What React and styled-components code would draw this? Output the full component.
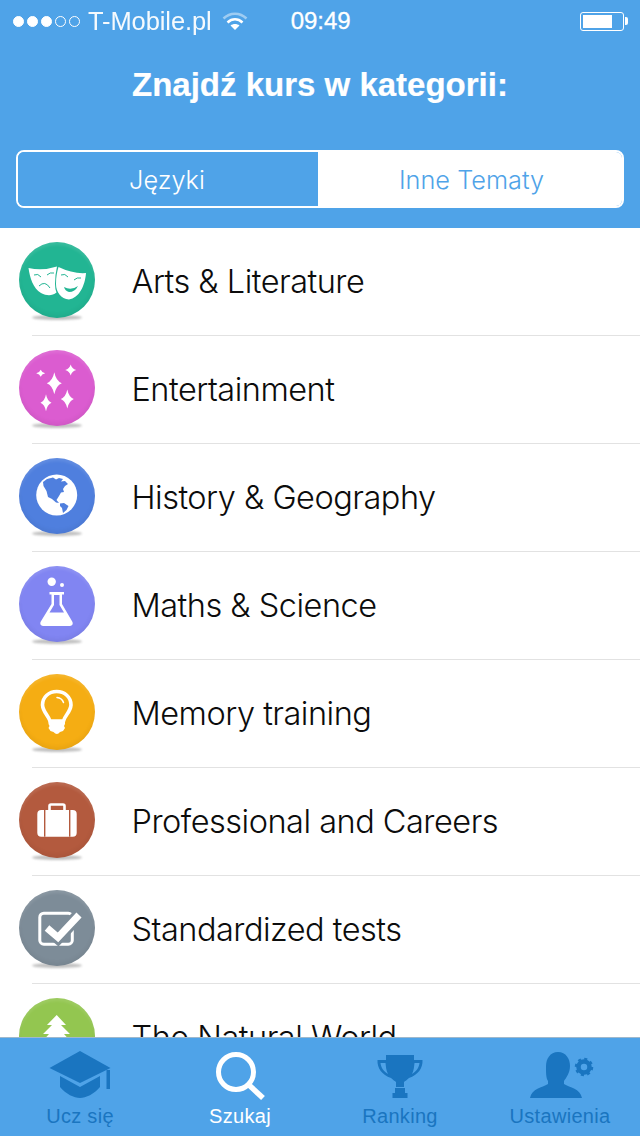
import React from "react";
import styled, { createGlobalStyle } from "styled-components";

const BLUE = "#4fa3e8";
const DARK = "#1a75c0";

const GlobalStyle = createGlobalStyle`
    html, body {
        margin: 0;
        padding: 0;
        background: #fff;
    }
    * { box-sizing: border-box; }
`;

const star = (cx, cy, rx, ry) => {
    const k = 0.22;
    return `M${cx} ${cy - ry}Q${cx + rx * k} ${cy - ry * k} ${cx + rx} ${cy}Q${cx + rx * k} ${cy + ry * k} ${cx} ${cy + ry}Q${cx - rx * k} ${cy + ry * k} ${cx - rx} ${cy}Q${cx - rx * k} ${cy - ry * k} ${cx} ${cy - ry}Z`;
};

const Masks = ({ color }) => (
    <svg width="76" height="76" viewBox="0 0 76 76">
        <path fill="#fff" d="M9.5 26Q24 29 38 24.5Q36 33 36 42Q36 47 37.5 50.5C33 54 28 54 22 51C14 46 11 36 9.5 26Z" />
        <path fill="none" stroke={color} strokeWidth="1" d="M15 33Q19 31 22 35M28 33Q31 30 35 31M20 44Q26 38 31 46" />
        <path fill="#fff" d="M39.5 25Q54 32 67 31C66 44 60 56 50 57.5C42 57 37 50 37 42C37 35 38 30 39.5 25Z" />
        <path fill="none" stroke={color} strokeWidth="1" d="M42 33Q46 31 49 35M55 38Q58 35 62 36" />
        <path fill={color} d="M45 45Q52 49 59 44Q56 50 50 50Q46 49 45 45Z" />
    </svg>
);

const Stars = () => (
    <svg width="76" height="76" viewBox="0 0 76 76">
        <path fill="#fff" d={star(21.7, 23.3, 4.5, 3.5)} />
        <path fill="#fff" d={star(51.7, 20, 5.5, 5.5)} />
        <path fill="#fff" d={star(35.3, 33.3, 7.5, 11)} />
        <path fill="#fff" d={star(48.3, 49, 6.5, 9.5)} />
        <path fill="#fff" d={star(27, 52.7, 5.5, 8.5)} />
    </svg>
);

const Globe = ({ color }) => (
    <svg width="76" height="76" viewBox="0 0 76 76">
        <circle cx="37.7" cy="37" r="20.5" fill="#fff" />
        <path fill={color} d="M24 24L28 21L34 19.5L37 21.5L40 20L44 21L42 23.5L46 23L49 26L46 28L44 31L45 34L42 34.5L40 38L37.5 42L40 45L37 44.5L33 41L29 39L27.5 33L24.5 28Z" />
        <path fill={color} d="M41 45.5L45 45L49.5 48L47.5 52L44 55L43 50L41 48Z" />
    </svg>
);

const Flask = ({ color }) => (
    <svg width="76" height="76" viewBox="0 0 76 76">
        <circle cx="32.7" cy="15.7" r="4.2" fill="#fff" />
        <circle cx="43" cy="19" r="2" fill="#fff" />
        <path fill="#fff" d="M30.5 26H45V28.5H43V38L53.5 56Q54.5 59.5 51 60H24Q20.5 59.5 21.5 56L32.5 38V28.5H30.5Z" />
        <path fill={color} d="M35 29H40.5V39L45 46.5H30.5L35 39Z" />
    </svg>
);

const Bulb = () => (
    <svg width="76" height="76" viewBox="0 0 76 76">
        <path fill="none" stroke="#fff" strokeWidth="3.6" d="M31 47C29 41 24 38 23.5 31C23.5 23 30 17.5 37.7 17.5C45.5 17.5 52 23 52 31C51.5 38 46 41 44.5 47Z" />
        <path fill="#fff" d="M29.5 46H46V50L45 52L46 54L44 57L41 58Q38 62 34.5 58L31.5 57L29.5 54L30.5 52L29.5 50Z" />
        <path fill="none" stroke="#fff" strokeWidth="1.5" strokeLinecap="round" d="M38 23.5Q43 24 44.5 28.5" />
    </svg>
);

const Case = ({ color }) => (
    <svg width="76" height="76" viewBox="0 0 76 76">
        <path fill="none" stroke="#fff" strokeWidth="2.6" d="M30.5 29V24Q30.5 22.5 32 22.5H44Q45.5 22.5 45.5 24V29" />
        <rect x="18.3" y="28" width="39.4" height="26.7" rx="4" fill="#fff" />
        <rect x="25" y="28" width="1.4" height="26.7" fill={color} />
        <rect x="50" y="28" width="1.4" height="26.7" fill={color} />
    </svg>
);

const Check = ({ color }) => (
    <svg width="76" height="76" viewBox="0 0 76 76">
        <rect x="20.8" y="23.2" width="32.5" height="31" rx="4" fill="none" stroke="#fff" strokeWidth="3" />
        <path fill="none" stroke={color} strokeWidth="13" d="M28 38L39 47.5L60 25" />
        <path fill="none" stroke="#fff" strokeWidth="7" d="M28 38L39 47.5L60 25" />
    </svg>
);

const Tree = () => (
    <svg width="76" height="76" viewBox="0 0 76 76">
        <path fill="#fff" d="M37.7 17L47 27H42L51 36H45L54 46H21L30 36H24L33 27H28Z" />
    </svg>
);

const categories = [
    { name: "Arts & Literature", color: "#22b593", Icon: Masks },
    { name: "Entertainment", color: "#db5cd0", Icon: Stars },
    { name: "History & Geography", color: "#4f7fde", Icon: Globe },
    { name: "Maths & Science", color: "#8185f2", Icon: Flask },
    { name: "Memory training", color: "#f5ad13", Icon: Bulb },
    { name: "Professional and Careers", color: "#b35a3e", Icon: Case },
    { name: "Standardized tests", color: "#7d8c98", Icon: Check },
    { name: "The Natural World", color: "#93c650", Icon: Tree },
];

const CapIcon = () => (
    <svg width="64" height="50" viewBox="0 0 64 50">
        <path fill={DARK} d="M32 1L62.5 18L32 33L1.5 18Z" />
        <path fill={DARK} d="M12 26L32 37L52 26V37C46 44 38 48 32 48C26 48 18 44 12 37Z" />
        <rect x="58.5" y="20" width="3.5" height="19" fill={DARK} />
    </svg>
);

const SearchIcon = () => (
    <svg width="64" height="50" viewBox="0 0 64 50">
        <circle cx="28" cy="22" r="17.5" fill="none" stroke="#fff" strokeWidth="5" />
        <path fill="none" stroke="#fff" strokeWidth="5.5" d="M41 35L55 48" />
    </svg>
);

const TrophyIcon = () => (
    <svg width="64" height="50" viewBox="0 0 64 50">
        <path fill={DARK} d="M18 5H46V10H54.5C55 18 50 25 41 28C39 30 37 31 36 32V37H28V32C27 31 25 30 23 28C14 25 9 18 9.5 10H18ZM12.5 13C13 17 15 21 20 24C18 20 18 17 17.5 13ZM51.5 13H46.5C46 17 46 20 44 24C49 21 51 17 51.5 13Z" />
        <rect x="27" y="38" width="10" height="5" fill={DARK} />
        <rect x="24.5" y="43" width="15" height="5" fill={DARK} />
    </svg>
);

const SettingsIcon = () => (
    <svg width="76" height="50" viewBox="0 0 76 50">
        <path fill={DARK} d="M36 2C44 2 48 9 48 16C48 23 44 28 42 31V34C48 38 58 38 60 48H8C10 38 20 38 26 34V31C24 28 24 23 24 16C24 9 28 2 36 2Z" />
        <circle cx="62" cy="17" r="5.5" fill="none" stroke={DARK} strokeWidth="4.5" />
        <circle cx="62" cy="17" r="8" fill="none" stroke={DARK} strokeWidth="2.5" strokeDasharray="3 3.28" />
    </svg>
);

const tabs = [
    { label: "Ucz się", Icon: CapIcon },
    { label: "Szukaj", Icon: SearchIcon, active: true },
    { label: "Ranking", Icon: TrophyIcon },
    { label: "Ustawienia", Icon: SettingsIcon },
];

export default function App() {
    return (
        <Screen>
            <GlobalStyle />
            <Header>
                <StatusBar>
                    <Signal>
                        <Dot $on /><Dot $on /><Dot $on /><Dot /><Dot />
                    </Signal>
                    <Carrier>T-Mobile.pl</Carrier>
                    <svg width="26" height="20" viewBox="0 0 26 20">
                        <path fill="none" stroke="#fff" strokeOpacity="0.45" strokeWidth="2.5" d="M1.5 7.5C8 1 18 1 24.5 7.5" />
                        <path fill="none" stroke="#fff" strokeWidth="2.5" d="M5.5 11.5C10 7.3 16 7.3 20.5 11.5" />
                        <path fill="#fff" d="M13 19L8.5 14.5C11 12.5 15 12.5 17.5 14.5Z" />
                    </svg>
                    <Clock>09:49</Clock>
                    <Battery>
                        <BatteryLevel />
                    </Battery>
                </StatusBar>
                <Title>Znajdź kurs w kategorii:</Title>
                <Segments>
                    <Segment $active>Języki</Segment>
                    <Segment>Inne Tematy</Segment>
                </Segments>
            </Header>
            <List>
                {categories.map(({ name, color, Icon }) => (
                    <Row key={name}>
                        <Badge $color={color}>
                            <Icon color={color} />
                        </Badge>
                        <RowText>
                            <RowName>{name}</RowName>
                        </RowText>
                    </Row>
                ))}
            </List>
            <TabBar>
                {tabs.map(({ label, Icon, active }) => (
                    <Tab key={label} $active={active}>
                        <Icon />
                        <span>{label}</span>
                    </Tab>
                ))}
            </TabBar>
        </Screen>
    );
}

const Screen = styled.div`
    width: 640px;
    height: 1136px;
    display: flex;
    flex-direction: column;
    overflow: hidden;
    font-family: "Inter", "Liberation Sans", sans-serif;
`;

const Header = styled.header`
    height: 228px;
    flex: none;
    background: ${BLUE};
    color: #fff;
    padding-top: 8px;
`;

const StatusBar = styled.div`
    height: 26px;
    display: flex;
    align-items: center;
    padding: 0 16px 0 13px;
    font-family: "Liberation Sans", sans-serif;
    svg {
        margin-left: 10px;
    }
`;

const Signal = styled.div`
    display: flex;
    gap: 3px;
`;

const Dot = styled.i`
    width: 11px;
    height: 11px;
    border-radius: 50%;
    border: 1px solid #fff;
    background: ${(p) => (p.$on ? "#fff" : "transparent")};
`;

const Carrier = styled.span`
    margin-left: 8px;
    font-size: 25.5px;
    opacity: 0.95;
    letter-spacing: -0.1px;
`;

const Clock = styled.span`
    margin-left: 43px;
    font-size: 24px;
    -webkit-text-stroke: 0.3px #fff;
`;

const Battery = styled.div`
    margin-left: auto;
    position: relative;
    width: 44px;
    height: 19px;
    border: 1.5px solid #fff;
    border-radius: 3px;
    padding: 2px;
    &::after {
        content: "";
        position: absolute;
        right: -5px;
        top: 4px;
        width: 3px;
        height: 8px;
        background: #fff;
        border-radius: 0 2px 2px 0;
    }
`;

const BatteryLevel = styled.div`
    width: 29px;
    height: 100%;
    background: #fff;
`;

const Title = styled.h1`
    margin: 30px 0 0;
    height: 42px;
    line-height: 42px;
    text-align: center;
    font-size: 33px;
    font-weight: 600;
    font-family: "Liberation Sans", sans-serif;
    -webkit-text-stroke: 0.2px #fff;
`;

const Segments = styled.div`
    margin: 44px 16px 0;
    height: 58px;
    display: flex;
    border: 2px solid #fff;
    border-radius: 8px;
    overflow: hidden;
`;

const Segment = styled.div`
    display: flex;
    align-items: center;
    justify-content: center;
    width: ${(p) => (p.$active ? "300px" : "auto")};
    flex: ${(p) => (p.$active ? "none" : 1)};
    padding: ${(p) => (p.$active ? "0 2px 0 0" : "0 0 0 3px")};
    background: ${(p) => (p.$active ? BLUE : "#fff")};
    color: ${(p) => (p.$active ? "#fff" : BLUE)};
    font-size: 25.3px;
    font-weight: 300;
`;

const List = styled.main`
    flex: 1;
    min-height: 0;
    overflow: hidden;
    background: #fff;
    isolation: isolate;
`;

const Row = styled.div`
    height: 108px;
    display: flex;
    padding-left: 19px;
`;

const Badge = styled.div`
    position: relative;
    flex: none;
    width: 76px;
    height: 76px;
    margin-top: 14px;
    border-radius: 50%;
    background: ${(p) => p.$color};
    box-shadow: inset 0 3px 3px rgba(255, 255, 255, 0.1), inset 0 -3px 4px rgba(0, 0, 0, 0.05);
    svg {
        display: block;
        position: relative;
    }
    &::before {
        content: "";
        position: absolute;
        left: 13px;
        right: 13px;
        bottom: -2px;
        height: 5px;
        border-radius: 50%;
        background: rgba(60, 60, 60, 0.32);
        filter: blur(1px);
        z-index: -1;
    }
`;

const RowText = styled.div`
    flex: 1;
    margin-left: -63px;
    padding-left: 99.5px;
    display: flex;
    align-items: center;
    border-bottom: 1px solid #e2e2e2;
`;

const RowName = styled.span`
    font-size: 32.5px;
    font-weight: 300;
    color: #0c0c0c;
    letter-spacing: -0.5px;
`;

const TabBar = styled.nav`
    height: 99px;
    flex: none;
    display: grid;
    grid-template-columns: repeat(4, 160px);
    background: ${BLUE};
    border-top: 1px solid #9fb8cc;
`;

const Tab = styled.div`
    display: flex;
    flex-direction: column;
    align-items: center;
    padding-top: 12px;
    font-size: 20px;
    letter-spacing: 0.3px;
    font-family: "Liberation Sans", sans-serif;
    color: ${(p) => (p.$active ? "#fff" : DARK)};
    svg {
        display: block;
        flex: none;
    }
    span {
        margin-top: 4px;
        line-height: 24px;
    }
`;
